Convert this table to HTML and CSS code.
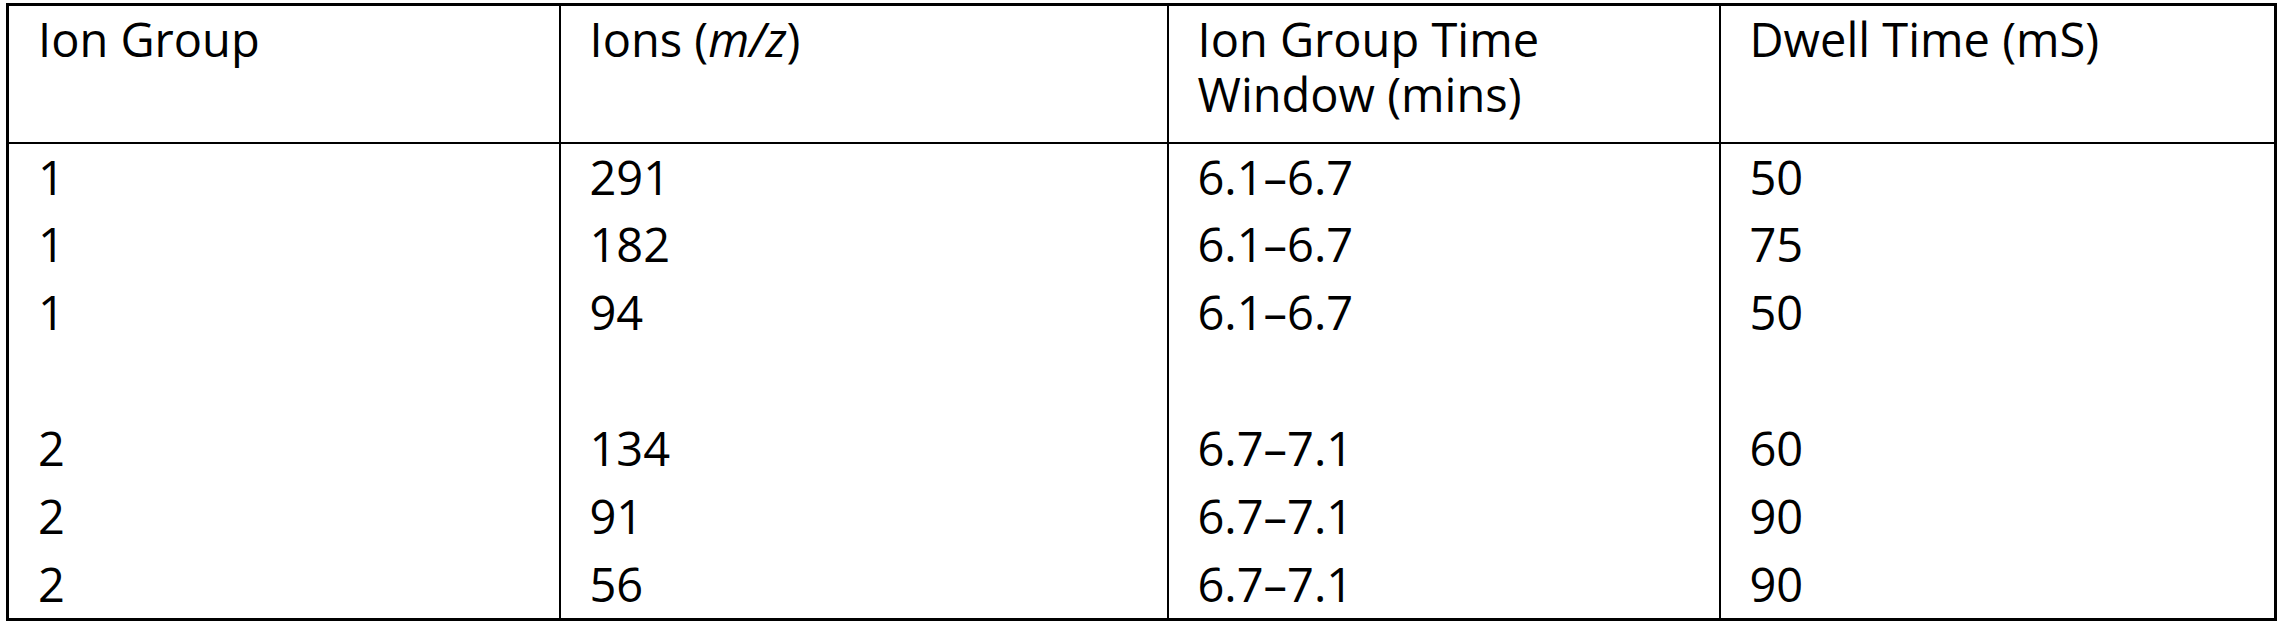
FILE: index.html
```html
<!doctype html>
<html>
	<head>
		<title>Ion Groups</title>

		<link rel="stylesheet" href="styles.css">
	</head>
	<body>
		<table class="ions">
			<colgroup>
				<col class="col-group">
				<col class="col-ions">
				<col class="col-window">
				<col class="col-dwell">
			</colgroup>
			<thead>
				<tr>
					<th>Ion Group</th>
					<th>Ions (<em>m/z</em>)</th>
					<th>Ion Group Time<br>Window (mins)</th>
					<th>Dwell Time (mS)</th>
				</tr>
			</thead>
			<tbody>
				<tr><td>1</td><td>291</td><td>6.1–6.7</td><td>50</td></tr>
				<tr><td>1</td><td>182</td><td>6.1–6.7</td><td>75</td></tr>
				<tr><td>1</td><td>94</td><td>6.1–6.7</td><td>50</td></tr>
				<tr><td></td><td></td><td></td><td></td></tr>
				<tr><td>2</td><td>134</td><td>6.7–7.1</td><td>60</td></tr>
				<tr><td>2</td><td>91</td><td>6.7–7.1</td><td>90</td></tr>
				<tr><td>2</td><td>56</td><td>6.7–7.1</td><td>90</td></tr>
			</tbody>
		</table>
	</body>
</html>
```

FILE: styles.css
```css
body {
	margin: 0;
	padding: 3px 0 0 6px;
	background: rgb(255,255,255);
	color: rgb(0,0,0);
	font-family: "Open Sans", "Liberation Sans", sans-serif;
}

	.ions {
		border-collapse: collapse;
		table-layout: fixed;
		width: 2268px;
		font-size: 47px;
		font-weight: 500;
		line-height: 55px;
	}

	.ions .col-group { width: 552px; }
	.ions .col-ions { width: 608px; }
	.ions .col-window { width: 552px; }
	.ions .col-dwell { width: 556px; }

	.ions th,
	.ions td {
		text-align: left;
		vertical-align: top;
		font-weight: 500;
		padding: 0 0 0 29px;
		border-left: 2px solid rgb(0,0,0);
		border-right: 2px solid rgb(0,0,0);
	}

	.ions thead th {
		height: 130px;
		padding-top: 6px;
		border-top: 3px solid rgb(0,0,0);
		border-bottom: 2px solid rgb(0,0,0);
	}

	.ions tbody td {
		height: 68px;
		padding-top: 6px;
		box-sizing: border-box;
	}

	.ions tbody tr:last-child td {
		border-bottom: 3px solid rgb(0,0,0);
	}

	.ions th:first-child,
	.ions td:first-child {
		border-left-width: 3px;
	}

	.ions th:last-child,
	.ions td:last-child {
		border-right-width: 3px;
	}
```
